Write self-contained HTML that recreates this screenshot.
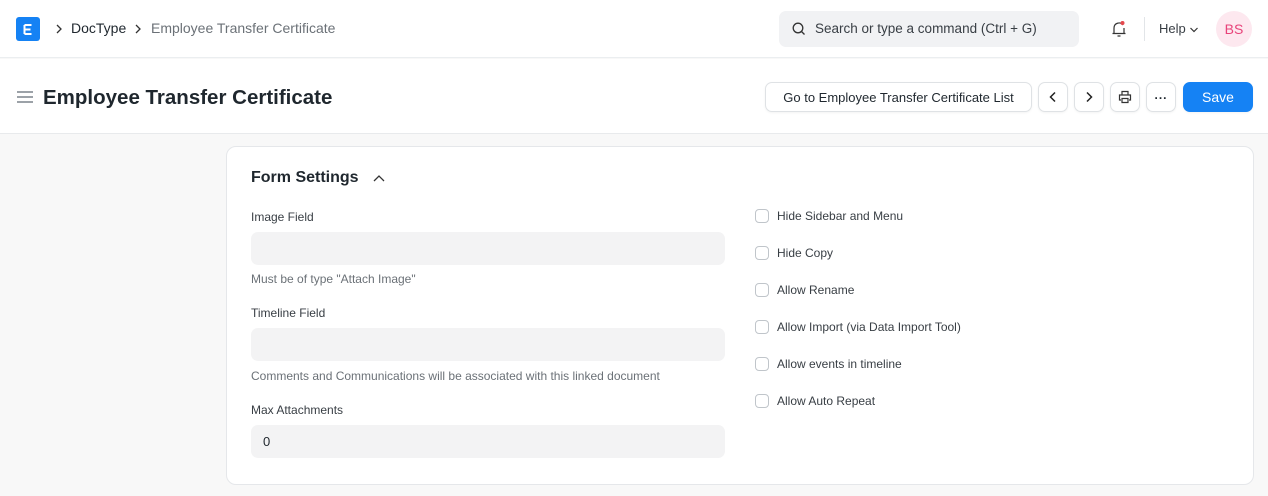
<!DOCTYPE html>
<html><head><style>
*{box-sizing:border-box;margin:0;padding:0}
body{width:1268px;height:496px;overflow:hidden;background:#f8f8f8;font-family:"Liberation Sans",sans-serif;color:#1f272e;position:relative}
.abs{position:absolute}
.nav{left:0;top:0;width:1268px;height:58px;background:#fff;border-bottom:1px solid #ebeef0}
.head{left:0;top:59px;width:1268px;height:75px;background:#fff;border-bottom:1px solid #e8eaec}
.btn{position:absolute;top:82px;height:30px;border:1px solid #dfe2e5;border-radius:7px;background:#fff;font-size:13px;display:flex;align-items:center;justify-content:center;color:#1f272e;box-shadow:0 1px 2px rgba(0,0,0,.05)}
.card{left:226px;top:146px;width:1028px;height:339px;background:#fff;border:1px solid #e5e7ea;border-radius:10px}
.lbl{position:absolute;font-size:12px;color:#383e44}
.inp{position:absolute;left:251px;width:474px;height:33px;background:#f3f3f4;border-radius:7px;font-size:13px;padding:9px 12px}
.desc{position:absolute;left:251px;font-size:12px;color:#6b7177}
.cb{position:absolute;left:755px;font-size:12px;color:#383e44;display:flex;align-items:center}
.cb i{width:14px;height:14px;border:1px solid #c0c5ca;border-radius:4px;margin-right:8px;display:inline-block}
</style></head><body>
<div class="abs nav"></div>
<div class="abs" style="left:16px;top:17px;width:24px;height:24px;background:#1582f4;border-radius:3px"></div>
<svg class="abs" style="left:16px;top:17px" width="24" height="24"><path d="M8.5 8h7M8.5 12.5h6M8.5 17h7M8.5 8v9" stroke="#fff" stroke-width="2" fill="none"/></svg>
<svg class="abs" style="left:55px;top:23px" width="8" height="12"><path d="M2 2l4 4-4 4" stroke="#333" stroke-width="1.3" fill="none"/></svg>
<div class="abs" style="left:71px;top:20px;font-size:14px;color:#1f272e">DocType</div>
<svg class="abs" style="left:134px;top:23px" width="8" height="12"><path d="M2 2l4 4-4 4" stroke="#333" stroke-width="1.3" fill="none"/></svg>
<div class="abs" style="left:151px;top:20px;font-size:14px;color:#6b7177">Employee Transfer Certificate</div>
<div class="abs" style="left:779px;top:11px;width:300px;height:36px;background:#f1f2f4;border-radius:7px"></div>
<svg class="abs" style="left:792px;top:22px" width="14" height="14"><circle cx="6" cy="6" r="4.8" stroke="#333" stroke-width="1.3" fill="none"/><path d="M9.5 9.5l3 3" stroke="#333" stroke-width="1.3"/></svg>
<div class="abs" style="left:815px;top:21px;font-size:13.5px;color:#383e44">Search or type a command (Ctrl + G)</div>
<svg class="abs" style="left:1110px;top:19px" width="18" height="20"><path d="M4 14V9a5 5 0 0 1 9-3M14 9v5M2.5 14.5h13M7.5 17h3" stroke="#333" stroke-width="1.2" fill="none"/><circle cx="12.5" cy="4" r="2" fill="#e5484d"/></svg>
<div class="abs" style="left:1144px;top:17px;width:1px;height:24px;background:#e2e5e8"></div>
<div class="abs" style="left:1159px;top:21px;font-size:13px;color:#383e44">Help</div>
<svg class="abs" style="left:1189px;top:26px" width="10" height="8"><path d="M1.5 2l3.5 3.5L8.5 2" stroke="#333" stroke-width="1.2" fill="none"/></svg>
<div class="abs" style="left:1216px;top:11px;width:36px;height:36px;border-radius:50%;background:#fde8ef;color:#e8437a;font-size:14px;display:flex;align-items:center;justify-content:center">BS</div>
<div class="abs head"></div>
<svg class="abs" style="left:17px;top:90px" width="17" height="14"><path d="M0 2h16M0 7h16M0 12h16" stroke="#7c848c" stroke-width="1.4"/></svg>
<div class="abs" style="left:43px;top:86px;font-size:20.5px;font-weight:bold;color:#1f272e">Employee Transfer Certificate</div>
<div class="btn" style="left:765px;width:267px">Go to Employee Transfer Certificate List</div>
<div class="btn" style="left:1038px;width:30px"><svg width="10" height="12"><path d="M7 1.5L2.5 6 7 10.5" stroke="#222" stroke-width="1.5" fill="none"/></svg></div>
<div class="btn" style="left:1074px;width:30px"><svg width="10" height="12"><path d="M3 1.5L7.5 6 3 10.5" stroke="#222" stroke-width="1.5" fill="none"/></svg></div>
<div class="btn" style="left:1110px;width:30px"><svg width="14" height="14"><path d="M4 5V1.5h6V5M3 10H1.5V5h11v5H11M4 8.5h6v4H4z" stroke="#333" stroke-width="1.2" fill="none"/></svg></div>
<div class="btn" style="left:1146px;width:30px;font-weight:bold;letter-spacing:1px;font-size:12px;padding-bottom:5px">...</div>
<div class="btn" style="left:1183px;width:70px;background:#1582f4;border-color:#1582f4;color:#fff;font-size:14px">Save</div>
<div class="abs card"></div>
<div class="abs" style="left:251px;top:169px;font-size:16px;font-weight:bold">Form Settings</div>
<svg class="abs" style="left:372px;top:174px" width="14" height="10"><path d="M2 7l5-5 5 5" stroke="#333" stroke-width="1.3" fill="none"/></svg>
<div class="lbl" style="left:251px;top:210px">Image Field</div>
<div class="inp" style="top:232px"></div>
<div class="desc" style="top:272px">Must be of type "Attach Image"</div>
<div class="lbl" style="left:251px;top:306px">Timeline Field</div>
<div class="inp" style="top:328px"></div>
<div class="desc" style="top:369px">Comments and Communications will be associated with this linked document</div>
<div class="lbl" style="left:251px;top:403px">Max Attachments</div>
<div class="inp" style="top:425px">0</div>
<div class="cb" style="top:209px"><i></i>Hide Sidebar and Menu</div>
<div class="cb" style="top:246px"><i></i>Hide Copy</div>
<div class="cb" style="top:283px"><i></i>Allow Rename</div>
<div class="cb" style="top:320px"><i></i>Allow Import (via Data Import Tool)</div>
<div class="cb" style="top:357px"><i></i>Allow events in timeline</div>
<div class="cb" style="top:394px"><i></i>Allow Auto Repeat</div>
</body></html>
